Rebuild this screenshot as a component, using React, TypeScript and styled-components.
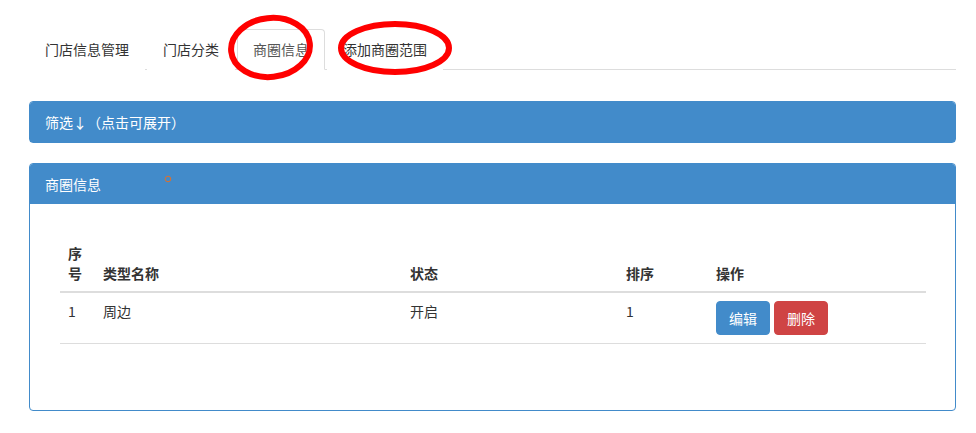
import React from "react";
import styled, { createGlobalStyle } from "styled-components";

const Global = createGlobalStyle`
  html, body { margin: 0; padding: 0; background: #fff; }
  body {
    font-family: "Noto Sans CJK SC", "Liberation Sans", "DejaVu Sans", sans-serif;
    font-size: 14px;
    line-height: 20px;
    color: #333;
  }
  * { box-sizing: border-box; }
`;

const Page = styled.div`
  position: relative;
  padding: 29px 20px 0 29px;
  width: 976px;
`;

const Tabs = styled.ul`
  display: flex;
  list-style: none;
  margin: 0;
  padding: 0;
  border-bottom: 1px solid #ddd;
`;

const Tab = styled.li<{ $active?: boolean }>`
  margin: 0 2px -1px 0;
  height: 41px;
  padding: 0 15px 1px;
  display: flex;
  align-items: center;
  font-size: 14px;
  color: ${(p) => (p.$active ? "#555" : "#333")};
  background: #fff;
  border: 1px solid ${(p) => (p.$active ? "#ddd" : "transparent")};
  border-bottom-color: ${(p) => (p.$active ? "#fff" : "transparent")};
  border-radius: 4px 4px 0 0;
`;

const Panel = styled.div<{ $gap: number }>`
  margin-top: ${(p) => p.$gap}px;
  border: 1px solid #428bca;
  border-radius: 4px;
  background: #fff;
`;

const PanelHeading = styled.div`
  background: #428bca;
  color: #fff;
  padding: 10px 15px;
  font-size: 14px;
  line-height: 20px;
  border-radius: 3px 3px 0 0;
`;

const PanelBody = styled.div`
  padding: 31px 29px 66px 30px;
`;

const Table = styled.table`
  width: 100%;
  border-collapse: collapse;
  font-size: 14px;
`;

const Th = styled.th<{ $w: number }>`
  width: ${(p) => p.$w}px;
  text-align: left;
  font-weight: bold;
  vertical-align: bottom;
  padding: 8px;
  line-height: 20px;
  color: #333;
  border-bottom: 2px solid #ddd;
`;

const Td = styled.td`
  padding: 8px;
  vertical-align: top;
  line-height: 20px;
  border-bottom: 1px solid #ddd;
  color: #333;
`;

const Btn = styled.button<{ $color: string }>`
  font-family: inherit;
  font-size: 14px;
  line-height: 20px;
  padding: 6px 12px;
  height: 34px;
  color: #fff;
  background: ${(p) => p.$color};
  border: 1px solid ${(p) => p.$color};
  border-radius: 4px;
  margin: 0 4px 0 0;
  cursor: pointer;
`;

const Marks = styled.svg`
  position: absolute;
  left: 0;
  top: 0;
  pointer-events: none;
`;

export default function App() {
  return (
    <>
      <Global />
      <Page>
        <Tabs>
          <Tab>门店信息管理</Tab>
          <Tab>门店分类</Tab>
          <Tab $active>商圈信息</Tab>
          <Tab>添加商圈范围</Tab>
        </Tabs>
        <Panel $gap={31}>
          <PanelHeading>筛选↓（点击可展开）</PanelHeading>
        </Panel>
        <Panel $gap={20}>
          <PanelHeading>商圈信息</PanelHeading>
          <PanelBody>
            <Table>
              <thead>
                <tr>
                  <Th $w={35}>序号</Th>
                  <Th $w={307}>类型名称</Th>
                  <Th $w={216}>状态</Th>
                  <Th $w={90}>排序</Th>
                  <Th $w={218}>操作</Th>
                </tr>
              </thead>
              <tbody>
                <tr>
                  <Td>1</Td>
                  <Td>周边</Td>
                  <Td>开启</Td>
                  <Td>1</Td>
                  <Td>
                    <Btn $color="#428bca">编辑</Btn>
                    <Btn $color="#cf4444">删除</Btn>
                  </Td>
                </tr>
              </tbody>
            </Table>
          </PanelBody>
        </Panel>
        <Marks width="976" height="433" viewBox="0 0 976 433">
          <ellipse cx="270.5" cy="47.5" rx="39.5" ry="29.5" fill="none" stroke="#ff0000" strokeWidth="6" transform="rotate(-6 270.5 47.5)" />
          <ellipse cx="395" cy="48" rx="54" ry="24" fill="none" stroke="#ff0000" strokeWidth="6" />
          <circle cx="168" cy="179" r="2.8" fill="none" stroke="#e0702a" strokeWidth="1" />
        </Marks>
      </Page>
    </>
  );
}
